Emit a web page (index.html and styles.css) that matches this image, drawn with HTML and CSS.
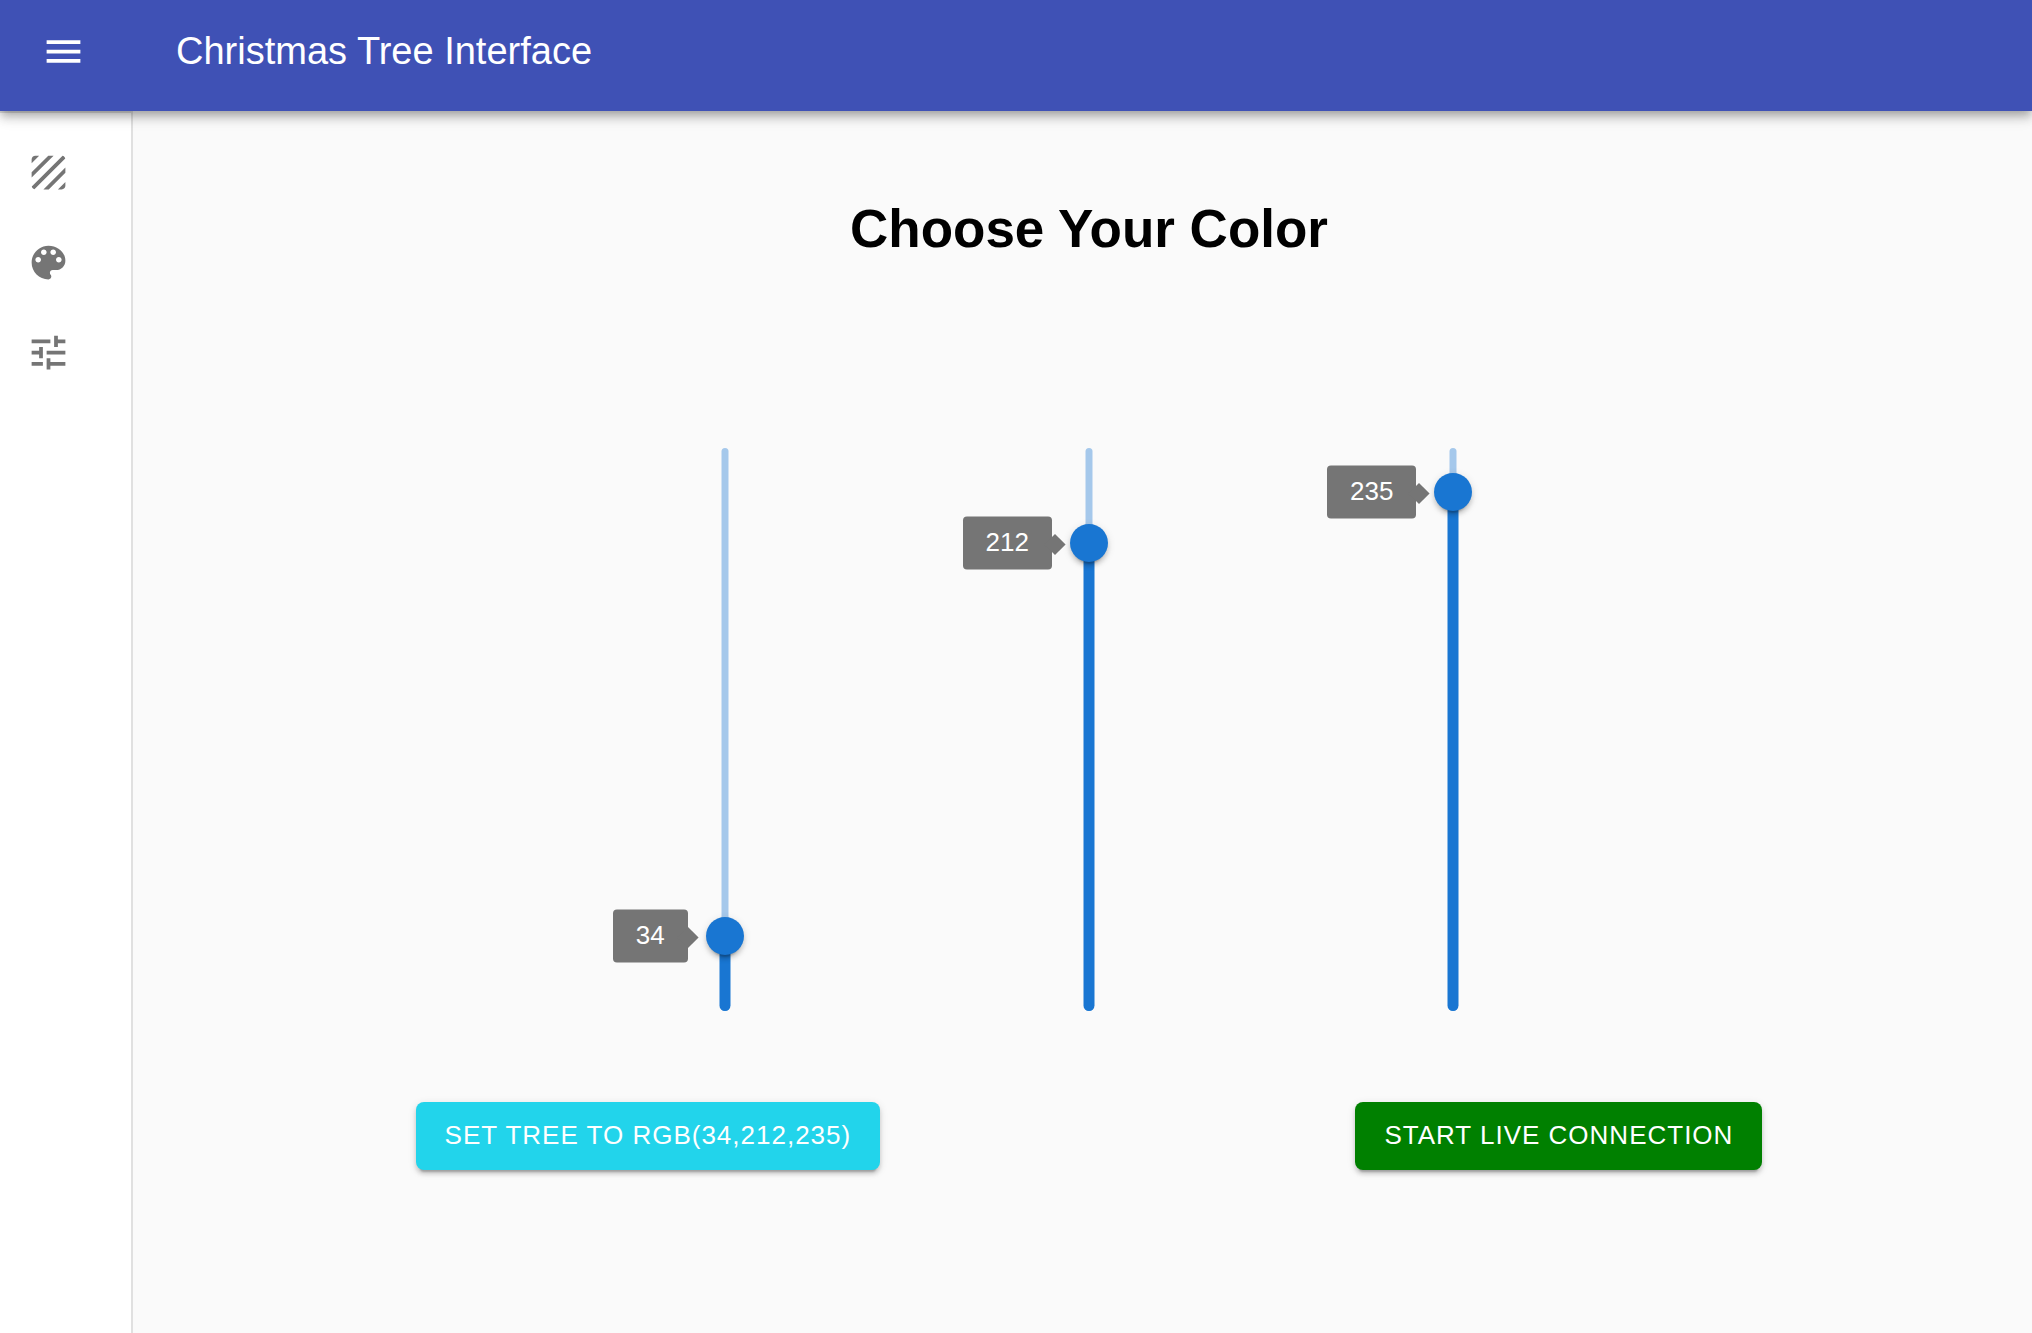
FILE: index.html
```html
<!DOCTYPE html>
<html lang="en">
<head>
  <meta charset="utf-8">
  <meta name="viewport" content="width=device-width, initial-scale=1">
  <title>Christmas Tree Interface</title>
  <link rel="stylesheet" href="styles.css">
</head>
<body>
  <header class="app-bar">
    <button class="menu-button" type="button" aria-label="Open menu">
      <svg class="icon" viewBox="0 0 24 24" aria-hidden="true"><path d="M3 18h18v-2H3v2zm0-5h18v-2H3v2zm0-7v2h18V6H3z"/></svg>
    </button>
    <h1 class="app-title">Christmas Tree Interface</h1>
  </header>
  <div class="layout">
    <nav class="drawer" aria-label="Main">
      <a class="drawer-link" href="#patterns" aria-label="Patterns">
        <svg class="icon" viewBox="0 0 24 24" aria-hidden="true"><path d="M19.51 3.08L3.08 19.51c.09.34.27.65.51.9.25.24.56.42.9.51L20.93 4.49c-.19-.69-.73-1.23-1.42-1.41zM11.88 3L3 11.88v2.83L14.71 3h-2.83zM5 3c-1.1 0-2 .9-2 2v2l4-4H5zm14 18c.55 0 1.05-.22 1.41-.59.37-.36.59-.86.59-1.41v-2l-4 4h2zm-9.71 0h2.83L21 12.12V9.29L9.29 21z"/></svg>
      </a>
      <a class="drawer-link" href="#color" aria-label="Color">
        <svg class="icon" viewBox="0 0 24 24" aria-hidden="true"><path d="M12 3c-4.97 0-9 4.03-9 9s4.03 9 9 9c.83 0 1.5-.67 1.5-1.5 0-.39-.15-.74-.39-1.01-.23-.26-.38-.61-.38-.99 0-.83.67-1.5 1.5-1.5H16c2.76 0 5-2.24 5-5 0-4.42-4.03-8-9-8zm-5.500 9c-.83 0-1.500-.67-1.500-1.500S5.670 9 6.500 9 8 9.670 8 10.500 7.330 12 6.500 12zm3-4C8.670 8 8 7.330 8 6.500S8.670 5 9.500 5s1.500.67 1.500 1.500S10.330 8 9.500 8zm5 0c-.83 0-1.500-.67-1.500-1.500S13.670 5 14.500 5s1.500.67 1.500 1.500S15.330 8 14.500 8zm3 4c-.83 0-1.500-.67-1.500-1.500S16.670 9 17.500 9s1.500.67 1.500 1.500-.67 1.500-1.500 1.500z"/></svg>
      </a>
      <a class="drawer-link" href="#settings" aria-label="Settings">
        <svg class="icon" viewBox="0 0 24 24" aria-hidden="true"><path d="M3 17v2h6v-2H3zM3 5v2h10V5H3zm10 16v-2h8v-2h-8v-2h-2v6h2zM7 9v2H3v2h4v2h2V9H7zm14 4v-2H11v2h10zm-6-4h2V7h4V5h-4V3h-2v6z"/></svg>
      </a>
    </nav>
    <main class="content">
      <h2 class="heading">Choose Your Color</h2>
      <div class="sliders">
        <div class="slider">
          <span class="rail"></span>
          <span class="fill" style="height: calc(100% * 34 / 255)"></span>
          <input class="range" id="red" type="range" min="0" max="255" value="34" aria-label="Red">
          <output class="value" for="red" style="bottom: calc(100% * 34 / 255)">34</output>
        </div>
        <div class="slider">
          <span class="rail"></span>
          <span class="fill" style="height: calc(100% * 212 / 255)"></span>
          <input class="range" id="green" type="range" min="0" max="255" value="212" aria-label="Green">
          <output class="value" for="green" style="bottom: calc(100% * 212 / 255)">212</output>
        </div>
        <div class="slider">
          <span class="rail"></span>
          <span class="fill" style="height: calc(100% * 235 / 255)"></span>
          <input class="range" id="blue" type="range" min="0" max="255" value="235" aria-label="Blue">
          <output class="value" for="blue" style="bottom: calc(100% * 235 / 255)">235</output>
        </div>
      </div>
      <div class="actions">
        <button class="button button-set" type="button">SET TREE TO RGB(34,212,235)</button>
        <button class="button button-live" type="button">START LIVE CONNECTION</button>
      </div>
    </main>
  </div>
</body>
</html>
```
FILE: styles.css
```css
* {
  box-sizing: border-box;
}

body {
  margin: 0;
  min-height: 100vh;
  display: flex;
  flex-direction: column;
  background: #fafafa;
  color: #000;
  font-family: "Liberation Sans", Arial, sans-serif;
}

.icon {
  display: block;
  width: 45px;
  height: 45px;
  fill: currentColor;
}

.app-bar {
  position: relative;
  z-index: 1;
  display: flex;
  align-items: center;
  gap: 90px;
  padding: 21px 41px 30px;
  background: #3f51b5;
  color: #fff;
  box-shadow: 0 4px 8px -2px rgba(0, 0, 0, 0.2), 0 8px 9px 0 rgba(0, 0, 0, 0.14), 0 2px 19px 0 rgba(0, 0, 0, 0.12);
}

.menu-button {
  padding: 0;
  border: 0;
  background: none;
  color: inherit;
  cursor: pointer;
}

.app-title {
  margin: 0;
  font-size: 38px;
  font-weight: 400;
  line-height: 60px;
}

.layout {
  flex: 1;
  display: flex;
}

.drawer {
  width: 133px;
  flex: none;
  padding: 14px 0;
  background: #fff;
  border-top: 2px solid #e0e0e0;
  border-right: 2px solid #e0e0e0;
}

.drawer-link {
  display: flex;
  align-items: center;
  height: 90px;
  padding-left: 26px;
  color: #757575;
}

.content {
  flex: 1;
  padding: 79px 32px 45px 45px;
}

.heading {
  margin: 0 0 181px;
  font-size: 53px;
  line-height: 77px;
  text-align: center;
}

.sliders {
  display: grid;
  grid-template-columns: repeat(3, 20%);
  justify-content: center;
  justify-items: center;
}

.slider {
  position: relative;
  width: 38px;
  height: 563px;
}

.rail,
.fill {
  position: absolute;
  bottom: 0;
  left: 50%;
  transform: translateX(-50%);
  background: #1976d2;
}

.rail {
  width: 7px;
  height: 100%;
  border-radius: 4px;
  opacity: 0.38;
}

.fill {
  width: 11px;
  border-radius: 6px;
}

.range {
  position: absolute;
  top: -19px;
  left: 0;
  width: 38px;
  height: calc(100% + 38px);
  margin: 0;
  appearance: none;
  background: none;
  writing-mode: vertical-lr;
  direction: rtl;
  cursor: pointer;
}

.range::-webkit-slider-thumb {
  appearance: none;
  width: 38px;
  height: 38px;
  border-radius: 50%;
  background: #1976d2;
  box-shadow: 0 6px 2px -4px rgba(0, 0, 0, 0.2), 0 4px 4px 0 rgba(0, 0, 0, 0.14), 0 2px 9px 0 rgba(0, 0, 0, 0.12);
}

.value {
  position: absolute;
  right: 56px;
  padding: 7px 23px 9px;
  border-radius: 4px;
  background: #757575;
  color: #fff;
  font-size: 26px;
  line-height: 37px;
  transform: translateY(50%);
}

.value::before {
  content: "";
  position: absolute;
  top: 25%;
  right: -20%;
  width: 15px;
  height: 15px;
  background: inherit;
  transform: translate(-50%, 50%) rotate(45deg);
}

.actions {
  display: flex;
  justify-content: space-around;
  margin-top: 91px;
}

.button {
  padding: 10px 29px 12px;
  border: 0;
  border-radius: 8px;
  color: #fff;
  font-family: inherit;
  font-size: 26px;
  line-height: 46px;
  letter-spacing: 1px;
  cursor: pointer;
  box-shadow: 0 6px 2px -4px rgba(0, 0, 0, 0.2), 0 4px 4px 0 rgba(0, 0, 0, 0.14), 0 2px 9px 0 rgba(0, 0, 0, 0.12);
}

.button-set {
  background: rgb(34, 212, 235);
}

.button-live {
  background: green;
}
```
